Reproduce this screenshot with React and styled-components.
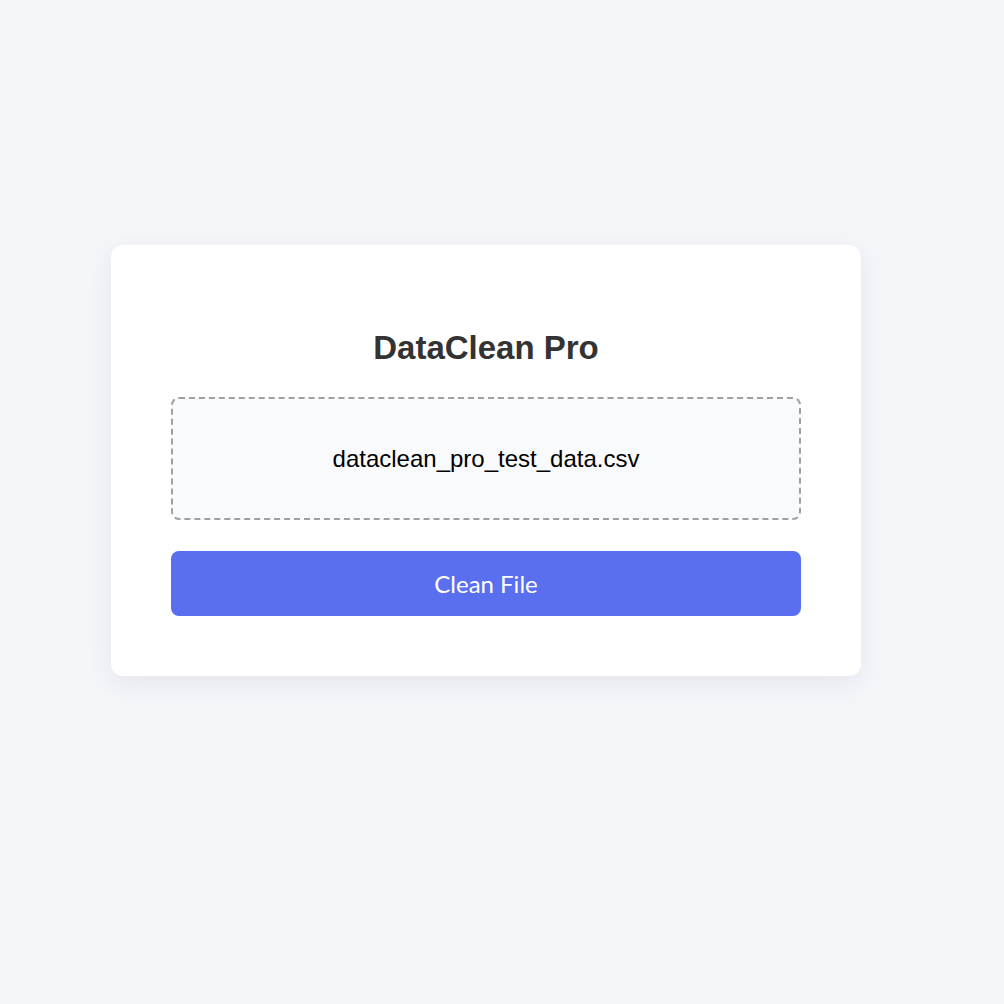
import React from "react";
import styled, { createGlobalStyle } from "styled-components";

const GlobalStyle = createGlobalStyle`
  html, body {
    margin: 0;
    padding: 0;
    background: #f5f6fa;
  }
  * { box-sizing: border-box; }
`;

const Page = styled.div`
  min-height: 1004px;
  padding: 245px 0 0 111px;
  font-family: "Liberation Sans", Arial, sans-serif;
`;

const Card = styled.div`
  width: 750px;
  background: #ffffff;
  border-radius: 12px;
  box-shadow: 0 8px 28px rgba(30, 40, 80, 0.08);
  padding: 60px;
  display: flex;
  flex-direction: column;
`;

const Title = styled.h2`
  margin: 24px 0 31px;
  font-size: 33px;
  line-height: 37px;
  font-weight: 700;
  color: #333333;
  text-align: center;
`;

const DropZone = styled.div`
  height: 123px;
  border: 2px dashed #a0a0a0;
  border-radius: 8px;
  background: #f9fafc;
  display: flex;
  align-items: center;
  justify-content: center;
  font-size: 24px;
  color: #000000;
`;

const Button = styled.button`
  margin-top: 31px;
  height: 65px;
  border: none;
  border-radius: 8px;
  background: #5a6ef0;
  color: #ffffff;
  font-family: Lato, "Open Sans", sans-serif;
  font-size: 24px;
  cursor: pointer;
`;

export default function App() {
  return (
    <Page>
      <GlobalStyle />
      <Card>
        <Title>DataClean Pro</Title>
        <DropZone>dataclean_pro_test_data.csv</DropZone>
        <Button>Clean File</Button>
      </Card>
    </Page>
  );
}
